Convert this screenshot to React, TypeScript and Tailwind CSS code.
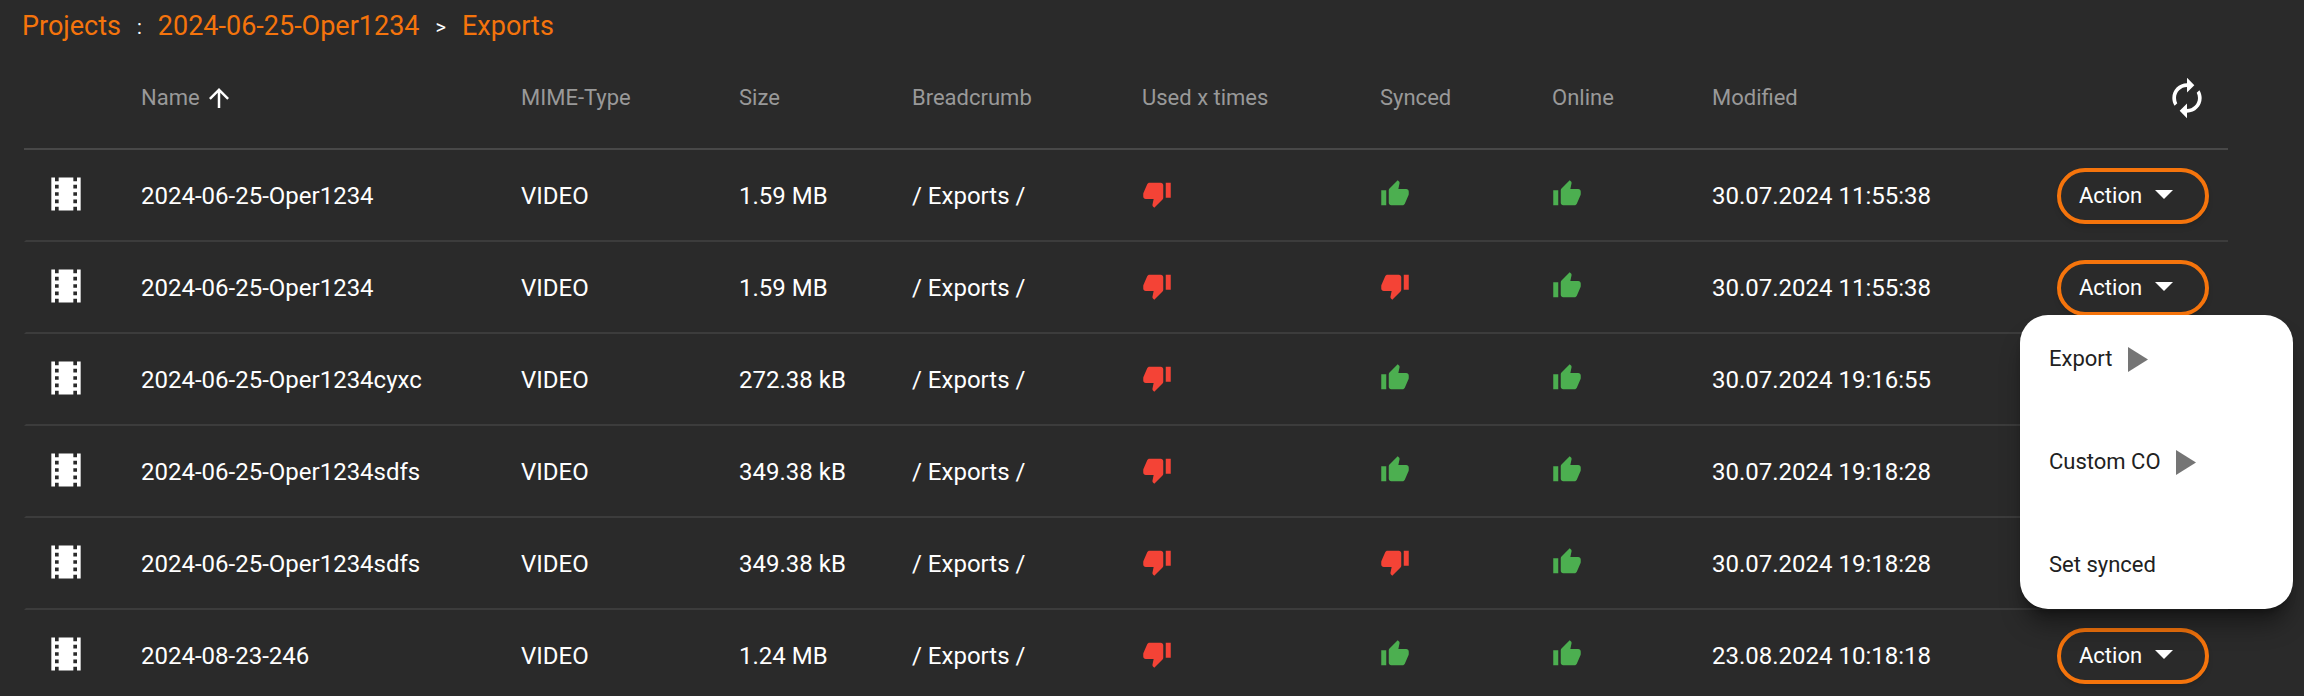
import { useState } from "react";
import { clsx } from "clsx";
import { MdArrowUpward, MdAutorenew, MdTheaters, MdThumbDown, MdThumbUp } from "react-icons/md";

interface MediaFile {
  id: number;
  name: string;
  mime: string;
  size: string;
  breadcrumb: string;
  used: boolean;
  synced: boolean;
  online: boolean;
  modified: string;
}

const FILES: MediaFile[] = [
  { id: 1, name: "2024-06-25-Oper1234", mime: "VIDEO", size: "1.59 MB", breadcrumb: "/ Exports /", used: false, synced: true, online: true, modified: "30.07.2024 11:55:38" },
  { id: 2, name: "2024-06-25-Oper1234", mime: "VIDEO", size: "1.59 MB", breadcrumb: "/ Exports /", used: false, synced: false, online: true, modified: "30.07.2024 11:55:38" },
  { id: 3, name: "2024-06-25-Oper1234cyxc", mime: "VIDEO", size: "272.38 kB", breadcrumb: "/ Exports /", used: false, synced: true, online: true, modified: "30.07.2024 19:16:55" },
  { id: 4, name: "2024-06-25-Oper1234sdfs", mime: "VIDEO", size: "349.38 kB", breadcrumb: "/ Exports /", used: false, synced: true, online: true, modified: "30.07.2024 19:18:28" },
  { id: 5, name: "2024-06-25-Oper1234sdfs", mime: "VIDEO", size: "349.38 kB", breadcrumb: "/ Exports /", used: false, synced: false, online: true, modified: "30.07.2024 19:18:28" },
  { id: 6, name: "2024-08-23-246", mime: "VIDEO", size: "1.24 MB", breadcrumb: "/ Exports /", used: false, synced: true, online: true, modified: "23.08.2024 10:18:18" },
];

const MENU_ITEMS = [
  { label: "Export", submenu: true },
  { label: "Custom CO", submenu: true },
  { label: "Set synced", submenu: false },
];

const HEAD_CELL = "border-b-2 border-[#484848] p-0 text-left font-normal";
const BODY_CELL = "border-b-2 border-[#3c3c3c] p-0";

export default function App() {
  const [openId, setOpenId] = useState<number | null>(2);

  return (
    <main className="h-screen overflow-hidden bg-[#2a2a2a] font-[Roboto,sans-serif] text-2xl text-white">
      <nav className="flex h-12 items-center gap-4 pt-1.5 pl-[22px] text-[27px]">
        <a href="#projects" className="text-[#f5740c]">Projects</a>
        <span className="text-xl">:</span>
        <a href="#project" className="text-[#f5740c]">2024-06-25-Oper1234</a>
        <span className="text-xl">&gt;</span>
        <a href="#exports" className="text-[#f5740c]">Exports</a>
      </nav>

      <div className="pr-[76px] pl-6">
        <table className="w-full table-fixed border-separate border-spacing-0">
          <thead>
            <tr className="h-[102px] text-[22px] text-[#999999]">
              <th className={clsx(HEAD_CELL, "w-[117px]")} />
              <th className={clsx(HEAD_CELL, "w-[380px]")}>
                <button className="flex items-center gap-1">
                  Name
                  <MdArrowUpward className="size-[30px] text-white" />
                </button>
              </th>
              <th className={clsx(HEAD_CELL, "w-[218px]")}>MIME-Type</th>
              <th className={clsx(HEAD_CELL, "w-[173px]")}>Size</th>
              <th className={clsx(HEAD_CELL, "w-[230px]")}>Breadcrumb</th>
              <th className={clsx(HEAD_CELL, "w-[238px]")}>Used x times</th>
              <th className={clsx(HEAD_CELL, "w-[172px]")}>Synced</th>
              <th className={clsx(HEAD_CELL, "w-[160px]")}>Online</th>
              <th className={clsx(HEAD_CELL, "w-[276px]")}>Modified</th>
              <th className={clsx(HEAD_CELL, "w-[240px]")}>
                <button aria-label="Refresh" className="mr-[19px] ml-auto block text-white">
                  <MdAutorenew className="size-11" />
                </button>
              </th>
            </tr>
          </thead>
          <tbody>
            {FILES.map((file) => (
              <tr key={file.id} className="h-[92px]">
                <td className={clsx(BODY_CELL, "border-l-2 border-l-[#2a2a2a] pb-0.5 pl-[18px]")}>
                  <MdTheaters className="size-11" />
                </td>
                <td className={clsx(BODY_CELL, "pt-0.5")}>{file.name}</td>
                <td className={clsx(BODY_CELL, "pt-0.5")}>{file.mime}</td>
                <td className={clsx(BODY_CELL, "pt-0.5")}>{file.size}</td>
                <td className={clsx(BODY_CELL, "pt-0.5")}>{file.breadcrumb}</td>
                <td className={clsx(BODY_CELL, "pb-0.5")}><Thumb up={file.used} /></td>
                <td className={clsx(BODY_CELL, "pb-0.5")}><Thumb up={file.synced} /></td>
                <td className={clsx(BODY_CELL, "pb-0.5")}><Thumb up={file.online} /></td>
                <td className={clsx(BODY_CELL, "pt-0.5")}>{file.modified}</td>
                <td className={clsx(BODY_CELL, "pt-0.5")}>
                  <div className="relative mr-[19px] ml-auto w-[152px]">
                    <button
                      aria-haspopup="menu"
                      onClick={() => setOpenId(openId === file.id ? null : file.id)}
                      className="flex h-14 w-full items-center gap-[13px] rounded-full border-4 border-[#f5740c] pl-[18px] text-[22px] shadow-md"
                    >
                      Action
                      <svg viewBox="0 0 18 9" className="mb-1 h-[9px] w-[18px] fill-current">
                        <path d="M0 0h18L9 9z" />
                      </svg>
                    </button>
                    {openId === file.id && <ActionMenu />}
                  </div>
                </td>
              </tr>
            ))}
          </tbody>
        </table>
      </div>
    </main>
  );
}

function Thumb({ up }: { up: boolean }) {
  return up
    ? <MdThumbUp className="size-[30px] text-[#4caf50]" />
    : <MdThumbDown className="size-[30px] text-[#f44336]" />;
}

function ActionMenu() {
  return (
    <div
      role="menu"
      className="absolute top-[55px] -right-[84px] z-10 flex w-[273px] flex-col gap-[15px] rounded-[28px] bg-white text-[22px] text-[#212121] shadow-xl shadow-black/40"
    >
      {MENU_ITEMS.map((item) => (
        <button key={item.label} role="menuitem" className="flex h-[88px] items-center gap-[15px] pl-[29px]">
          {item.label}
          {item.submenu && (
            <svg viewBox="0 0 20 25" className="h-[25px] w-5 fill-[#757575]">
              <path d="M0 0l20 12.5L0 25z" />
            </svg>
          )}
        </button>
      ))}
    </div>
  );
}
